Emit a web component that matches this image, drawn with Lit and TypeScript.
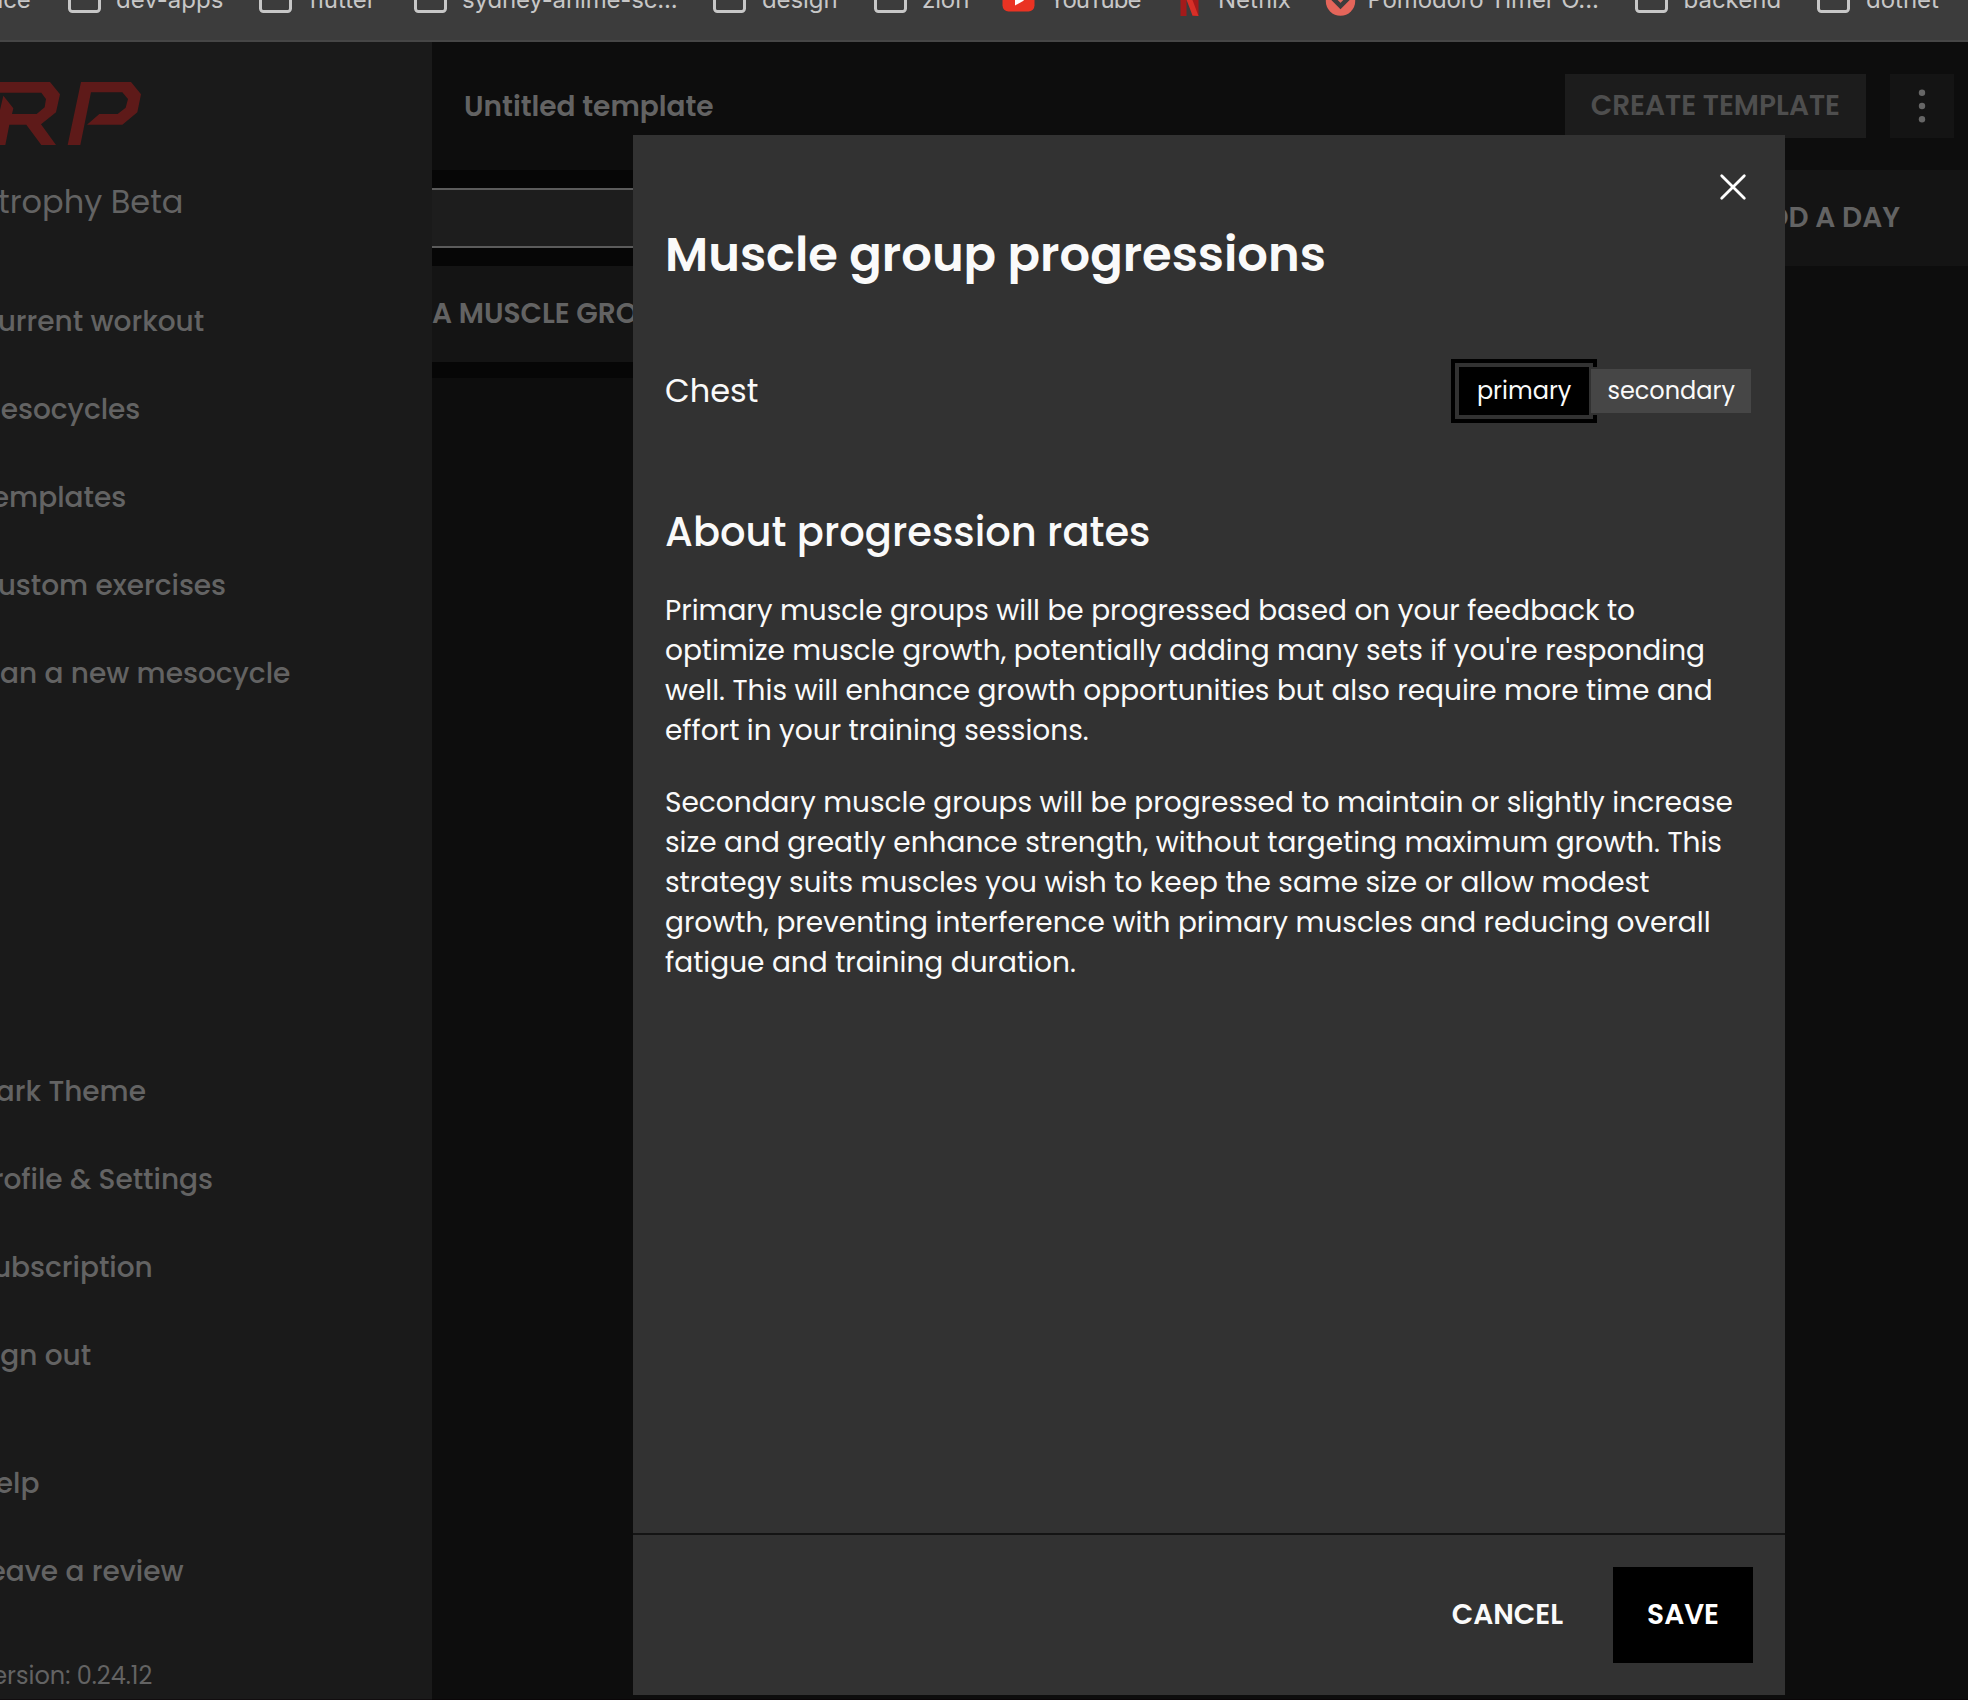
import { LitElement, html, css, svg } from 'lit';
import { customElement } from 'lit/decorators.js';

interface Bookmark {
  kind: 'folder' | 'youtube' | 'netflix' | 'pomodoro' | 'none';
  label: string;
  width: number;
  iconWidth: number;
  tracking: number;
}

const BOOKMARKS: Bookmark[] = [
  { kind: 'none', label: 'ice', width: 67.5, iconWidth: 0, tracking: -0.15 },
  { kind: 'folder', label: 'dev-apps', width: 191.5, iconWidth: 48.5, tracking: 0 },
  { kind: 'folder', label: 'flutter', width: 155, iconWidth: 50, tracking: 0 },
  { kind: 'folder', label: 'sydney-anime-sc...', width: 299, iconWidth: 48, tracking: -0.15 },
  { kind: 'folder', label: 'design', width: 160.5, iconWidth: 49, tracking: -0.1 },
  { kind: 'folder', label: 'zion', width: 128, iconWidth: 48.5, tracking: -0.1 },
  { kind: 'youtube', label: 'YouTube', width: 171.5, iconWidth: 47.5, tracking: -1 },
  { kind: 'netflix', label: 'Netflix', width: 152, iconWidth: 45, tracking: 0 },
  { kind: 'pomodoro', label: 'Pomodoro Timer O...', width: 310, iconWidth: 42.5, tracking: -0.15 },
  { kind: 'folder', label: 'backend', width: 182, iconWidth: 48.5, tracking: 0 },
  { kind: 'folder', label: 'dotnet', width: 150, iconWidth: 49, tracking: 0 },
];

const ICONS = {
  none: svg``,
  folder: svg`<rect x="1.5" y="1.5" width="30" height="24" rx="3" fill="none" stroke="#c7c7c7" stroke-width="3" />
    <path d="M1.5 6V3q0-1.500 1.500-1.500h9l3 4" fill="none" stroke="#c7c7c7" stroke-width="3" />`,
  youtube: svg`<rect x="0.500" y="2.500" width="32" height="23" rx="6" fill="#ea3323" />
    <path d="M13 9.500l9 5-9 5z" fill="#fff" />`,
  netflix: svg`<path d="M7.500-2h6v32h-6z M19.500-2h6v32h-6z" fill="#a41a1a" />
    <path d="M7.500-2h6l12 32q-3-0.500-6-0.500z" fill="#d82f27" />`,
  pomodoro: svg`<circle cx="15.500" cy="15" r="14.700" fill="#e4655a" />
    <path d="M7.500 12l8 8 8-8" fill="none" stroke="#3c3c3c" stroke-width="4.500" />`,
};

@customElement('bookmark-bar')
export class BookmarkBar extends LitElement {
  static styles = css`
    :host {
      display: block;
      box-sizing: border-box;
      height: 42px;
      overflow: hidden;
      background: #3c3c3c;
      border-bottom: 2px solid #464646;
      font: 400 24px/40px Inter, 'Liberation Sans', sans-serif;
      color: #c7c7c7;
      white-space: nowrap;
    }
    .row { display: flex; height: 40px; margin-top: -21px; }
    .item { display: flex; align-items: center; flex: none; }
    .item:first-child { margin-left: -2.5px; padding-right: 2.5px; }
    .icon { display: flex; flex: none; }
    .label { padding-top: 2px; }
    svg { display: block; overflow: visible; }
  `;

  render() {
    return html`<div class="row">
      ${BOOKMARKS.map(
        (b) => html`<div class="item" style="width:${b.width}px">
          <span class="icon" style="width:${b.iconWidth}px">
            ${b.kind === 'none' ? null : html`<svg width="33" height="27" viewBox="0 0 33 27">${ICONS[b.kind]}</svg>`}
          </span>
          <span class="label" style="letter-spacing:${b.tracking}px">${b.label}</span>
        </div>`,
      )}
    </div>`;
  }
}

@customElement('side-nav')
export class SideNav extends LitElement {
  static styles = css`
    :host {
      display: flex;
      flex-direction: column;
      flex: none;
      width: 432px;
      overflow: hidden;
      background: #1a1a1a;
      color: #636363;
      white-space: nowrap;
      font-weight: 500;
    }
    .logo { display: block; flex: none; margin-top: 40px; }
    .product { font-size: 32px; font-weight: 400; line-height: 48px; margin: 32px 0 52px -2px; }
    .item { height: 88px; line-height: 88px; margin-left: -24px; flex: none; }
    .middle { margin-top: auto; }
    .support { margin-top: 40px; }
    .version { font-size: 24px; font-weight: 400; line-height: 36px; margin: 42px 0 6px -24px; }
  `;

  private group(labels: string[]) {
    return labels.map((l) => html`<div class="item">${l}</div>`);
  }

  render() {
    return html`
      <svg class="logo" width="142" height="64" viewBox="0 0 426 192">
        <path
          fill="#5e1a19"
          d="M0 0H150L180 37 168 91 123 127 168 189H124L79 128H28L16 189H0V84L10 41 40 79 36 96H110L134 76 138 51 124 32H0Z
             M243 0H393L423 37 412 91 367 128H261L298 96H353L377 77 384 51 367 31H273L241 189H203Z"
        />
      </svg>
      <div class="product">trophy Beta</div>
      ${this.group(['Current workout', 'Mesocycles', 'Templates', 'Custom exercises', 'Plan a new mesocycle'])}
      <div class="middle">${this.group(['Dark Theme', 'Profile & Settings', 'Subscription', 'Sign out'])}</div>
      <div class="support">${this.group(['Help', 'Leave a review'])}</div>
      <div class="version">Version: 0.24.12</div>
    `;
  }
}

@customElement('template-board')
export class TemplateBoard extends LitElement {
  static styles = css`
    :host {
      display: flex;
      flex-direction: column;
      flex: 1;
      min-width: 0;
      background: #0d0d0d;
      color: #636363;
      font-weight: 600;
      white-space: nowrap;
    }
    header {
      display: flex;
      align-items: center;
      box-sizing: border-box;
      height: 128px;
      padding: 0 14px 0 32px;
    }
    .title { flex: 1; padding-top: 2px; }
    .create {
      height: 64px;
      line-height: 64px;
      padding: 0 26px;
      background: #1c1c1c;
      color: #4e4e4e;
    }
    .menu {
      display: grid;
      place-items: center;
      width: 64px;
      height: 64px;
      margin-left: 24px;
      background: #141414;
    }
    .days { display: flex; align-items: flex-start; }
    .day { width: 640px; background: #060606; padding: 18px 0 16px; }
    .select { box-sizing: border-box; height: 60px; border: solid #5b5b5b; border-width: 2px 0; background: #1d1d1d; }
    .muscle { height: 96px; line-height: 96px; margin-top: 18px; background: #141414; }
    .add {
      flex: 1;
      height: 96px;
      line-height: 96px;
      padding-right: 68px;
      background: #141414;
      text-align: right;
    }
  `;

  render() {
    return html`
      <header>
        <div class="title">Untitled template</div>
        <div class="create">CREATE TEMPLATE</div>
        <div class="menu">
          <svg width="8" height="34" viewBox="0 0 8 34" fill="#666">
            <circle cx="4" cy="3.700" r="3.200" />
            <circle cx="4" cy="17" r="3.200" />
            <circle cx="4" cy="30.300" r="3.200" />
          </svg>
        </div>
      </header>
      <div class="days">
        <div class="day">
          <div class="select"></div>
          <div class="muscle">A MUSCLE GROUP</div>
        </div>
        <div class="add">ADD A DAY</div>
      </div>
    `;
  }
}

@customElement('progression-dialog')
export class ProgressionDialog extends LitElement {
  static styles = css`
    :host {
      display: flex;
      flex-direction: column;
      box-sizing: border-box;
      width: 1152px;
      height: 1560px;
      background: #323232;
      color: #fafafa;
    }
    .body { flex: 1; padding: 0 32px; }
    .top { display: flex; justify-content: flex-end; padding: 36px 4px 0 0; }
    .close { display: block; }
    h2 { margin: 20px 0 0; font-size: 48px; font-weight: 600; line-height: 64px; }
    .group {
      display: flex;
      align-items: center;
      justify-content: space-between;
      height: 64px;
      margin-top: 72px;
      font-size: 32px;
    }
    .toggle { display: flex; font-size: 24px; line-height: 44px; }
    .choice { padding: 0 16px; border: 2px solid #323232; background: #464646; position: relative; }
    .choice.on { background: #000; border-color: #000; outline: 4px solid #000; outline-offset: 4px; }
    h3 { margin: 85px 0 35px; font-size: 40px; font-weight: 500; line-height: 48px; }
    p { margin: 0 0 32px; line-height: 40px; }
    footer {
      display: flex;
      justify-content: flex-end;
      align-items: center;
      gap: 16px;
      box-sizing: border-box;
      height: 162px;
      padding: 0 32px;
      border-top: 2px solid #141414;
      font-weight: 600;
    }
    .button { height: 96px; line-height: 96px; padding: 0 34px; }
    .save { background: #000; color: #fff; }
  `;

  render() {
    return html`
      <div class="body">
        <div class="top">
          <svg class="close" width="32" height="32" viewBox="0 0 32 32" fill="none" stroke="#fff" stroke-width="2.800" stroke-linecap="round">
            <path d="M4.700 4.700L27.300 27.300M27.300 4.700L4.700 27.300" />
          </svg>
        </div>
        <h2>Muscle group progressions</h2>
        <div class="group">
          <span>Chest</span>
          <div class="toggle">
            <span class="choice on">primary</span>
            <span class="choice">secondary</span>
          </div>
        </div>
        <h3>About progression rates</h3>
        <p>
          Primary muscle groups will be progressed based on your feedback to optimize muscle growth, potentially adding
          many sets if you're responding well. This will enhance growth opportunities but also require more time and
          effort in your training sessions.
        </p>
        <p>
          Secondary muscle groups will be progressed to maintain or slightly increase size and greatly enhance strength,
          without targeting maximum growth. This strategy suits muscles you wish to keep the same size or allow modest
          growth, preventing interference with primary muscles and reducing overall fatigue and training duration.
        </p>
      </div>
      <footer>
        <div class="button">CANCEL</div>
        <div class="button save">SAVE</div>
      </footer>
    `;
  }
}

@customElement('app-root')
export class AppRoot extends LitElement {
  static styles = css`
    :host {
      display: flex;
      flex-direction: column;
      position: relative;
      width: 1968px;
      height: 1700px;
      overflow: hidden;
      background: #0d0d0d;
      font: 400 28px/40px Poppins, Inter, 'Liberation Sans', sans-serif;
    }
    .app { display: flex; flex: 1; min-height: 0; }
    .dialog { position: absolute; left: 633px; top: 135px; }
    .edge { position: absolute; left: 0; right: 0; bottom: 0; height: 1px; background: rgba(8, 0, 4, 0.5); }
  `;

  render() {
    return html`
      <bookmark-bar></bookmark-bar>
      <div class="app">
        <side-nav></side-nav>
        <template-board></template-board>
      </div>
      <progression-dialog class="dialog"></progression-dialog>
      <div class="edge"></div>
    `;
  }
}
